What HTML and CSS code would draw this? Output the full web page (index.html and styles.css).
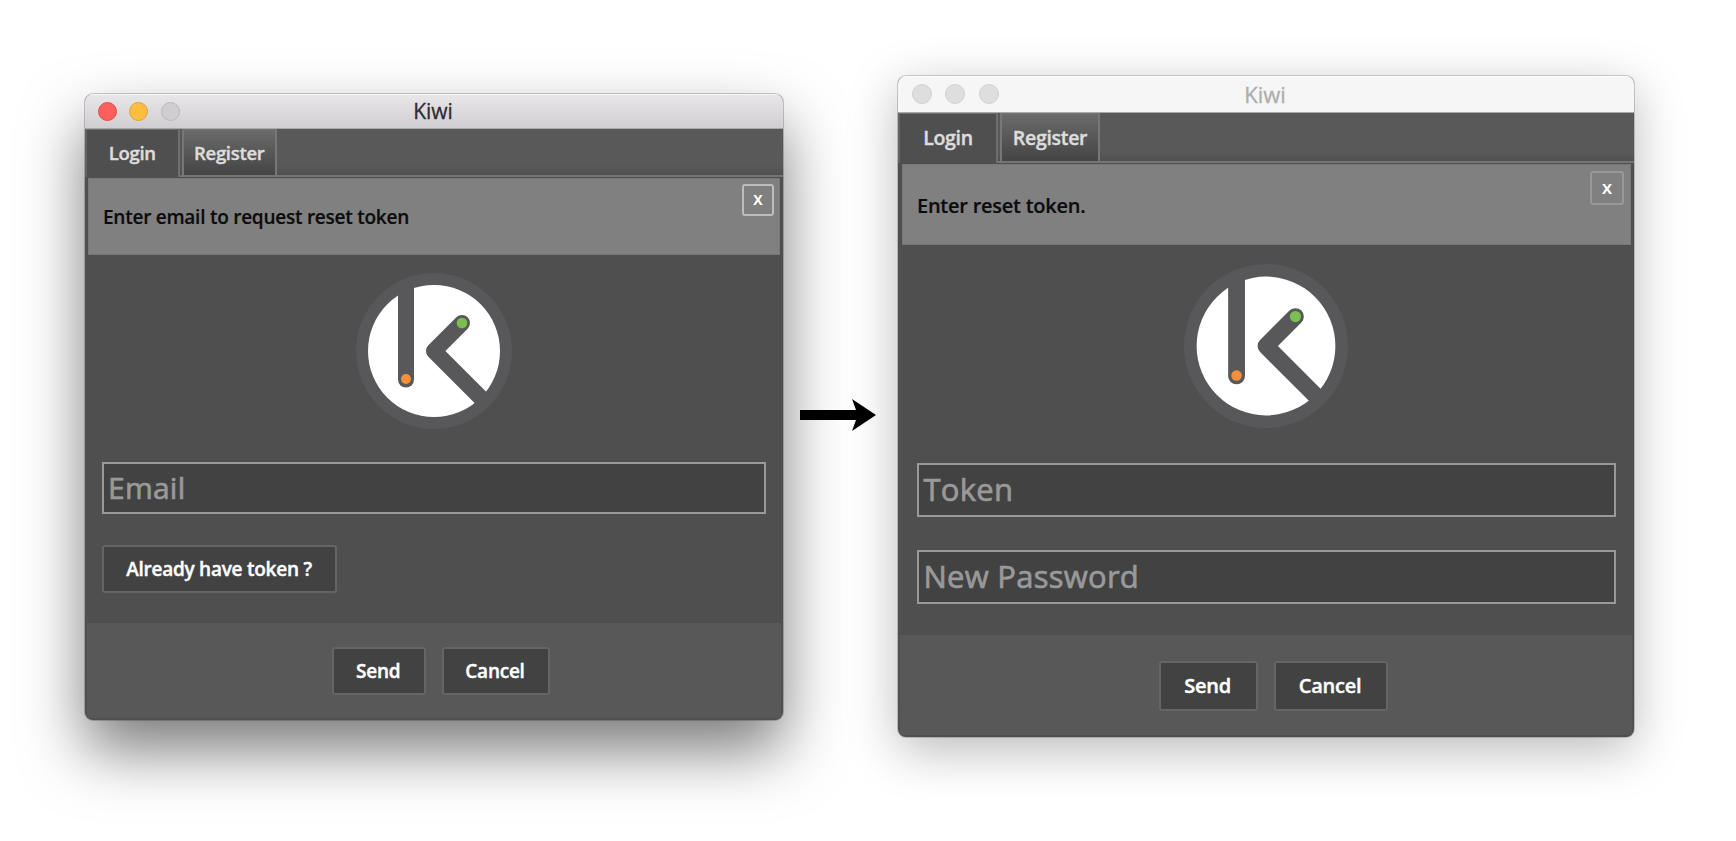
FILE: index.html
```html
<!DOCTYPE html>
<html lang="en">
<head>
<meta charset="utf-8">
<title>Kiwi</title>
<link rel="stylesheet" href="styles.css">
</head>
<body>
<svg width="0" height="0" class="defs" aria-hidden="true">
  <symbol id="logo" viewBox="-78 -78 156 156">
    <clipPath id="disc"><circle r="70"/></clipPath>
    <circle r="78" fill="#58585a"/>
    <circle r="66" fill="#fff"/>
    <g clip-path="url(#disc)" fill="none" stroke="#58585a" stroke-width="16" stroke-linecap="round" stroke-linejoin="round">
      <path d="M-28-76V28.500"/>
      <path d="M28-28L0 0L60 60"/>
    </g>
    <circle cx="-28" cy="28" r="5" fill="#f68f3c"/>
    <circle cx="28" cy="-28" r="5.300" fill="#7abf50"/>
  </symbol>
</svg>
<main class="stage">
  <section class="window window-email">
    <header class="titlebar">
      <div class="lights"><i class="light red"></i><i class="light amber"></i><i class="light"></i></div>
      <h1 class="title">Kiwi</h1>
    </header>
    <nav class="tabs"><span class="tab active"><b>Login</b></span><span class="tab"><b>Register</b></span></nav>
    <div class="banner"><p class="message">Enter email to request reset token</p><button class="close">X</button></div>
    <div class="form">
      <svg class="logo"><use href="#logo"/></svg>
      <div class="field"><span>Email</span></div>
      <button class="btn have-token">Already have token ?</button>
    </div>
    <footer class="actions"><button class="btn send">Send</button><button class="btn cancel">Cancel</button></footer>
  </section>
  <svg class="arrow" viewBox="0 0 76 32"><path d="M0 11H56L52 0L76 16L52 32L56 21H0Z"/></svg>
  <section class="window window-token">
    <header class="titlebar">
      <div class="lights"><i class="light"></i><i class="light"></i><i class="light"></i></div>
      <h1 class="title">Kiwi</h1>
    </header>
    <nav class="tabs"><span class="tab active"><b>Login</b></span><span class="tab"><b>Register</b></span></nav>
    <div class="banner"><p class="message">Enter reset token.</p><button class="close">X</button></div>
    <div class="form">
      <svg class="logo"><use href="#logo"/></svg>
      <div class="field"><span>Token</span></div>
      <div class="field"><span>New Password</span></div>
    </div>
    <footer class="actions"><button class="btn send">Send</button><button class="btn cancel">Cancel</button></footer>
  </section>
</main>
</body>
</html>
```
FILE: styles.css
```css
* { box-sizing: border-box; }
body { margin: 0; background: #fff; font-family: "Open Sans", "Noto Sans", sans-serif; }
.defs { position: absolute; }
.stage { display: flex; align-items: flex-start; width: 1736px; height: 841px; padding-left: 85px; overflow: hidden; }

.window { flex: none; display: flex; flex-direction: column; border-radius: 8px; overflow: hidden; background: #4f4f4f; }
.window-email {
  --btn-h: 48px; --text: 19px;
  width: 698px; height: 626px; margin-top: 94px;
  box-shadow: 0 0 0 1px rgba(0,0,0,.2), 0 30px 62px rgba(0,0,0,.52);
}
.window-token {
  --btn-h: 50px; --text: 20px;
  width: 736px; height: 661px; margin-top: 76px;
  box-shadow: 0 0 0 1px rgba(0,0,0,.18), 0 13px 50px rgba(0,0,0,.28);
}
.arrow { flex: none; width: 76px; height: 32px; margin: 399px 22px 0 17px; position: relative; z-index: 1; }

.titlebar { flex: none; display: grid; grid-template-columns: 1fr auto 1fr; align-items: center; border-bottom: 1px solid #a8a8a8; }
.window-email .titlebar { height: 35px; background: linear-gradient(#e9e7ea, #d0ced1); box-shadow: inset 0 1px #f5f4f6; }
.window-token .titlebar { height: 37px; background: #f6f6f6; box-shadow: inset 0 1px #fff; }
.lights { display: flex; }
.window-email .lights { gap: 12.500px; padding-left: 12.500px; }
.window-token .lights { gap: 13.500px; padding-left: 13.500px; }
.light { width: 19px; height: 19px; border-radius: 50%; background: #cfcfcf; border: 1px solid #b8b8b8; }
.window-token .light { width: 20px; height: 20px; background: #dedede; border-color: #d0d0d0; }
.red { background: #fd605c; border-color: #e34b48; }
.amber { background: #fdbd40; border-color: #dfa136; }
.title { margin: 0 2px 0 0; padding-top: 1px; font-size: 21px; line-height: 33px; font-weight: 400; color: #2e2c2f; -webkit-text-stroke: .3px currentColor; }
.window-token .title { font-size: 22px; color: #adadad; }

.tabs { flex: none; display: flex; background: linear-gradient(#595959 80%, #505050); border-bottom: 2px solid #757575; }
.window-email .tabs { height: 48px; gap: 2.500px; }
.window-token .tabs { height: 50px; gap: 2px; }
.tab { display: flex; justify-content: center; border: 2px solid #777; border-top-width: 1px; border-bottom: 0; background: linear-gradient(#6b6b6b, #444); color: #ddd; }
.tab b { font-weight: 600; letter-spacing: -.3px; -webkit-text-stroke: .4px currentColor; }
.active { background: #4f4f4f; border-color: #6e6e6e; border-left-color: #636363; margin-bottom: -2px; }
.window-email .tab { width: 94.500px; font-size: 18.500px; line-height: 45px; }
.window-token .tab { width: 100px; font-size: 19.500px; line-height: 48px; }

.banner { flex: none; display: flex; justify-content: space-between; background: #808080; border: 1px solid #777; }
.window-email .banner { height: 77px; margin: 1px 3px 0; padding: 5px 5px 0 14px; }
.window-token .banner { height: 81px; margin: 1px 3px 0 4px; padding: 6px 6px 0 14px; }
.message { margin: 0; font-weight: 600; color: #0c0c0c; white-space: nowrap; font-size: var(--text); letter-spacing: -.25px; -webkit-text-stroke: .2px currentColor; }
.window-email .message { line-height: 67px; }
.window-token .message { line-height: 70px; }
.close { padding: 0; border: 2px solid #bdbdbd; border-radius: 3px; background: #808080; color: #fff; font: 700 14px/1 "Open Sans", sans-serif; width: 32px; height: 32px; }
.window-token .close { width: 34px; height: 34px; border-color: #989898; font-size: 15px; }

.form { flex: none; display: flex; flex-direction: column; }
.window-email .form { height: 368px; padding: 18px 17px 0; }
.window-token .form { height: 389.500px; padding: 19px 18.500px 0; }
.logo { align-self: center; flex: none; }
.window-email .logo { width: 156px; height: 156px; margin-bottom: 33px; }
.window-token .logo { width: 164px; height: 164px; margin-bottom: 35px; }
.field { flex: none; border: 2px solid #999; background: #424242; color: #999; white-space: nowrap; letter-spacing: .25px; -webkit-text-stroke: .7px currentColor; }
.window-email .field { height: 52px; padding-left: 4px; font-size: 30px; line-height: 47px; margin-bottom: 31px; }
.window-token .field { height: 54px; padding-left: 5px; font-size: 31px; line-height: 49px; margin-bottom: 33px; }
.btn { flex: none; height: var(--btn-h); padding: 1px 1px 0 0; border: 2px solid #656565; border-radius: 3px; background: #424242; color: #fff; font: 600 var(--text)/1 "Open Sans", sans-serif; letter-spacing: -.25px; -webkit-text-stroke: .4px currentColor; white-space: nowrap; }
.have-token { width: 235px; }

.actions { flex: 1; display: flex; margin: 0 2px 2px; background: #585858; }
.window-email .actions { padding: 24px 0 0 245px; gap: 16px; }
.window-token .actions { padding: 26px 0 0 258.500px; gap: 16px; }
.window-email .send { width: 93.500px; }
.window-email .cancel { width: 108px; }
.window-token .send { width: 99px; }
.window-token .cancel { width: 114px; }
```
